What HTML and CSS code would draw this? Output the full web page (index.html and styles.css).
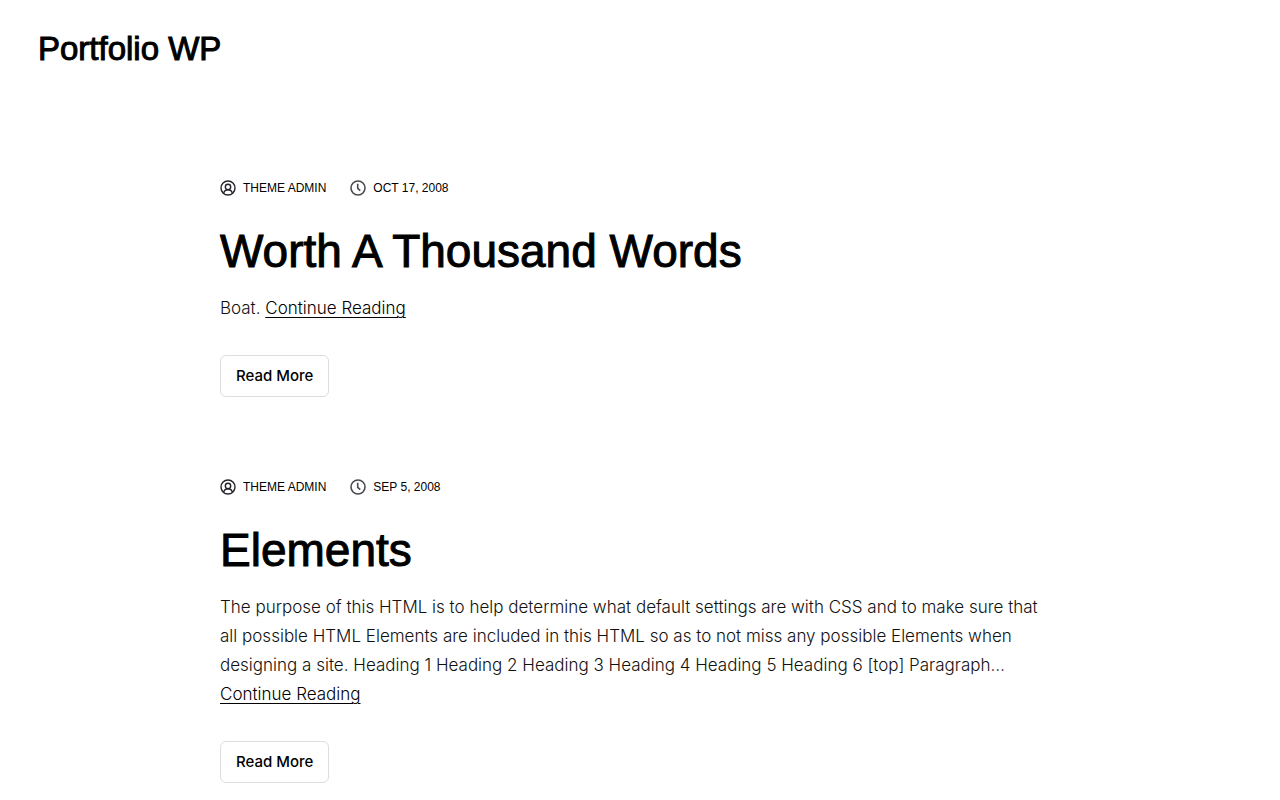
FILE: index.html
```html
<!DOCTYPE html>
<html lang="en">
<head>
	<title>Portfolio WP</title>
	<meta charset="utf-8">
	<meta name="viewport" content="width=device-width, initial-scale=1">
	<link rel="stylesheet" href="styles.css">
</head>
<body>
	<svg class="sprite" aria-hidden="true">
		<symbol id="icon-user" viewBox="0 0 16 16">
			<circle cx="8" cy="8" r="7" />
			<circle cx="8" cy="7" r="2.7" />
			<path d="M3.7 13.2C4.2 11 5.8 9.8 8 9.8s3.8 1.2 4.3 3.4" />
		</symbol>
		<symbol id="icon-clock" viewBox="0 0 16 16">
			<circle cx="8" cy="8" r="7" />
			<path d="M7.7 3.8V8.3l2.6 2.3" />
		</symbol>
	</svg>

	<header class="site-header">
		<a class="site-title" href="#">Portfolio WP</a>
	</header>

	<main class="posts">
		<article class="post">
			<div class="post-meta">
				<a class="meta-item" href="#"><svg class="icon icon-user"><use href="#icon-user" /></svg>THEME ADMIN</a>
				<a class="meta-item" href="#"><svg class="icon icon-clock"><use href="#icon-clock" /></svg><time datetime="2008-10-17">OCT 17, 2008</time></a>
			</div>
			<h2 class="post-title"><a href="#">Worth A Thousand Words</a></h2>
			<p class="post-text">Boat. <a class="continue" href="#">Continue Reading</a></p>
			<button class="read-more" type="button">Read More</button>
		</article>

		<article class="post">
			<div class="post-meta">
				<a class="meta-item" href="#"><svg class="icon icon-user"><use href="#icon-user" /></svg>THEME ADMIN</a>
				<a class="meta-item" href="#"><svg class="icon icon-clock"><use href="#icon-clock" /></svg><time datetime="2008-09-05">SEP 5, 2008</time></a>
			</div>
			<h2 class="post-title"><a href="#">Elements</a></h2>
			<p class="post-text">The purpose of this HTML is to help determine what default settings are with CSS and to make sure that all possible HTML Elements are included in this HTML so as to not miss any possible Elements when designing a site. Heading 1 Heading 2 Heading 3 Heading 4 Heading 5 Heading 6 [top] Paragraph… <a class="continue" href="#">Continue Reading</a></p>
			<button class="read-more" type="button">Read More</button>
		</article>
	</main>
</body>
</html>
```

FILE: styles.css
```css
* {
	box-sizing: border-box;
}
body {
	margin: 0;
	background: #fff;
	color: #000;
	font-family: Inter, "Liberation Sans", sans-serif;
}
a {
	color: inherit;
	text-decoration: none;
}
.sprite {
	display: none;
}
.site-header {
	display: flex;
	padding: 28px 38px 26px;
}
.site-title {
	font-family: "Liberation Sans", Arial, sans-serif;
	font-size: 33px;
	line-height: 42px;
	-webkit-text-stroke: 1px #000;
}
.posts {
	display: flex;
	flex-direction: column;
	gap: 78px;
	max-width: 880px;
	margin: 0 auto;
	padding: 80px 20px 18px;
}
.post-meta {
	display: flex;
	gap: 24px;
	margin-bottom: 24px;
}
.meta-item {
	display: flex;
	align-items: center;
	gap: 7px;
	font-family: "Liberation Sans", Arial, sans-serif;
	font-size: 12px;
	line-height: 24px;
}
.icon {
	width: 16px;
	height: 16px;
	fill: none;
	stroke: #22222a;
	stroke-width: 1.4;
}
.icon-clock {
	stroke: #4a4a50;
	stroke-width: 1.6;
}
.post-title {
	margin: 0 0 16px;
	font-family: "Liberation Sans", Arial, sans-serif;
	font-size: 46px;
	font-weight: 400;
	line-height: 54px;
	-webkit-text-stroke: 1px #000;
}
.post-text {
	max-width: 832px;
	margin: 0 0 32px;
	color: #111;
	font-size: 17px;
	font-weight: 300;
	line-height: 29px;
}
.continue {
	color: #000;
	text-decoration: underline;
	text-decoration-thickness: 1px;
	text-underline-offset: 3px;
}
.read-more {
	display: block;
	height: 42px;
	padding: 0 15px;
	border: 1px solid #ddd;
	border-radius: 6px;
	background: #fff;
	color: #000;
	font-family: inherit;
	font-size: 15px;
	font-weight: 500;
	line-height: 20px;
	cursor: pointer;
}
```
